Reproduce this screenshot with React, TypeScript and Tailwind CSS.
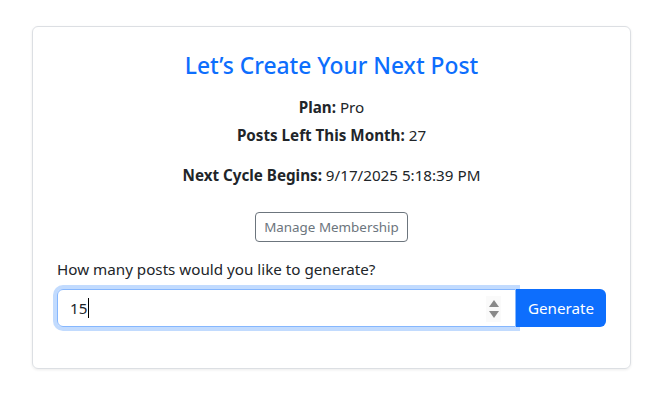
export default function App() {
  return (
    <div className="min-h-[401px] bg-white text-[#212529] text-[15.2px] font-['Noto_Sans',sans-serif]">
      <div className="pt-[26px] pl-[32px]">
        <div className="w-[599px] h-[343px] rounded-[6px] border border-[#dcdfe3] shadow-[0_1px_3px_rgba(0,0,0,0.08)] px-[24px] pt-[24px]">
          <h3 className="text-center text-[#0d6efd] text-[22.8px] font-medium leading-[1.2] mt-[1px]">
            Let’s Create Your Next Post
          </h3>
          <div className="mt-[16px] text-center leading-[24px]">
            <p className="mb-[4px]"><span className="font-bold">Plan:</span> Pro</p>
            <p><span className="font-bold">Posts Left This Month:</span> 27</p>
            <p className="mt-[16px]"><span className="font-bold">Next Cycle Begins:</span> 9/17/2025 5:18:39 PM</p>
          </div>
          <div className="mt-[25px] flex justify-center">
            <button className="h-[30px] px-[8px] text-[13.4px] text-[#6c757d] border border-[#6c757d] rounded-[4px]">
              Manage Membership
            </button>
          </div>
          <label className="block mt-[15px] leading-[24px]">How many posts would you like to generate?</label>
          <div className="mt-[8px] flex">
            <div className="relative flex-1 h-[38px] border border-[#86b7fe] rounded-l-[6px] shadow-[0_0_0_4px_rgba(13,110,253,0.25)] flex items-center pl-[12px]">
              <span>15</span>
              <span className="w-px h-[20px] bg-black ml-px" />
              <div className="absolute right-[14px] top-[6px] w-[15px] h-[26px] bg-[#fafafa] flex flex-col items-center justify-center gap-[4px]">
                <svg width="10" height="7" viewBox="0 0 10 7"><path d="M5 0 L10 7 L0 7 Z" fill="#8a8a8a" /></svg>
                <svg width="10" height="7" viewBox="0 0 10 7"><path d="M0 0 L10 0 L5 7 Z" fill="#8a8a8a" /></svg>
              </div>
            </div>
            <button className="w-[90px] h-[38px] bg-[#0d6efd] text-white rounded-r-[6px]">Generate</button>
          </div>
        </div>
      </div>
    </div>
  );
}
